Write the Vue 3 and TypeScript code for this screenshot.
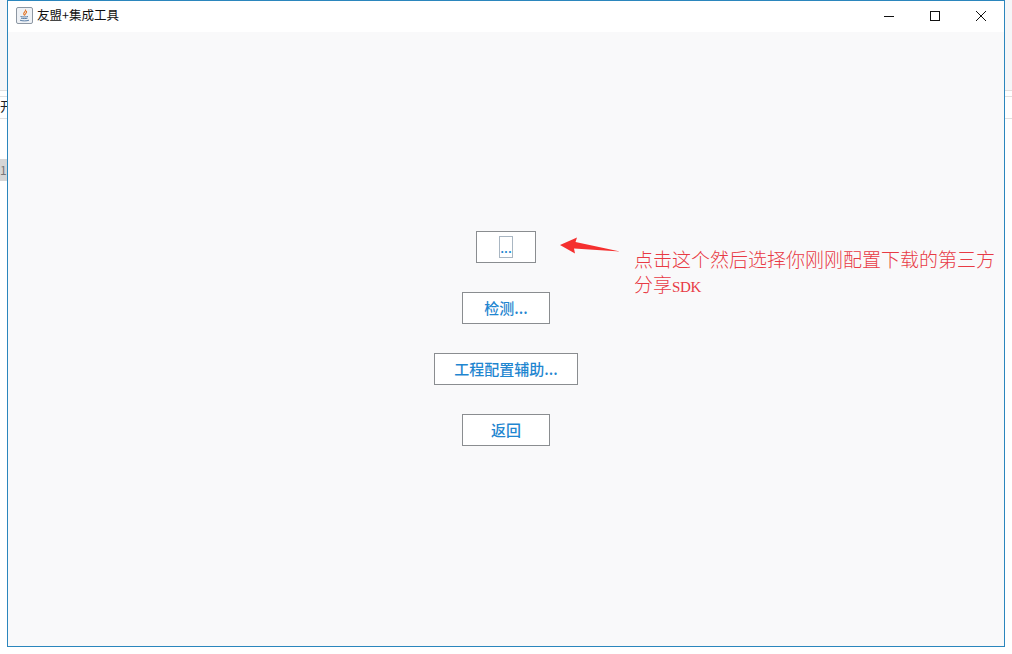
<script setup lang="ts">
const buttons: { label: string; cls: string }[] = [
  { label: '...', cls: 'b-browse' },
  { label: '检测...', cls: 'b-check' },
  { label: '工程配置辅助...', cls: 'b-wide' },
  { label: '返回', cls: 'b-check' },
]
</script>

<template>
  <div class="desktop">
    <div class="behind">
      <div class="behind-top"></div>
      <div class="behind-gap"></div>
      <div class="behind-tab"><span class="behind-text">开</span></div>
      <div class="behind-row"><span class="behind-num">1</span></div>
    </div>
    <div class="window">
      <header class="titlebar">
        <svg class="java" width="17" height="17" viewBox="0 0 17 17">
          <rect x="0.5" y="0.5" width="16" height="16" rx="1.5" fill="#eef1f5" stroke="#8d97a3" />
          <path d="M9.5 2.5c1 1.6-2.4 2.8-1.8 4.6.2.6.6 1 .9 1.4-.2-1.2 2.8-2.4 1.9-4.6" fill="none" stroke="#e2762a" stroke-width="1.1" />
          <path d="M4.5 9.5c1.6.6 6 .6 7.5 0M5 11.2c1.5.5 5 .5 6.5 0M4 13.2c2 .9 7 .9 9 0" fill="none" stroke="#5a7fa8" stroke-width="1" />
        </svg>
        <span class="title">友盟+集成工具</span>
        <div class="controls">
          <svg width="12" height="12" viewBox="0 0 12 12"><path d="M1 6.5h10" stroke="#111" stroke-width="1" /></svg>
          <svg width="12" height="12" viewBox="0 0 12 12"><rect x="1.5" y="1.5" width="9" height="9" fill="none" stroke="#111" stroke-width="1" /></svg>
          <svg width="12" height="12" viewBox="0 0 12 12"><path d="M1 1l10 10M11 1L1 11" stroke="#111" stroke-width="1" /></svg>
        </div>
      </header>
      <main class="content">
        <button v-for="b in buttons" :key="b.label" class="btn" :class="b.cls" type="button">
          <span class="btn-label">{{ b.label }}</span>
        </button>
      </main>
      <svg class="arrow" width="62" height="20" viewBox="0 0 62 20">
        <path d="M0 8L17 0.5L15.5 5L60 14.5L14 11.5L15 16.5Z" fill="#f5302f" />
      </svg>
      <p class="note">点击这个然后选择你刚刚配置下载的第三方<br />分享<span class="latin">SDK</span></p>
    </div>
  </div>
</template>

<style>
html, body { margin: 0; padding: 0; background: #fff; }
</style>

<style scoped>
.desktop {
  position: relative;
  width: 1012px;
  height: 654px;
  overflow: hidden;
  background: #fff;
  font-family: "Noto Sans CJK SC", sans-serif;
}
.behind {
  display: flex;
  flex-direction: column;
}
.behind-top {
  height: 90px;
  background: #f5f6f8;
}
.behind-gap {
  height: 5px;
  border-top: 1px solid #e0e0e0;
}
.behind-tab {
  height: 21px;
  border-top: 1px solid #e0e0e0;
  border-bottom: 1px solid #e0e0e0;
  overflow: hidden;
}
.behind-text {
  display: block;
  width: 7px;
  overflow: hidden;
  font-size: 13px;
  line-height: 18px;
  color: #222;
}
.behind-row {
  padding-top: 40px;
}
.behind-num {
  display: block;
  width: 7px;
  height: 22px;
  overflow: hidden;
  background: #d6d6d6;
  font-size: 12px;
  line-height: 22px;
  color: #777;
}
.window {
  position: absolute;
  left: 7px;
  top: 0;
  width: 996px;
  height: 645px;
  display: flex;
  flex-direction: column;
  border: 1px solid #2b86bd;
  background: #f9f9fa;
}
.titlebar {
  height: 31px;
  box-sizing: border-box;
  flex: none;
  display: flex;
  align-items: center;
  background: #fff;
  padding: 0 0 2px 8px;
}
.java { flex: none; }
.title {
  margin: 0 0 2px 4px;
  font-size: 12.5px;
  color: #111;
}
.controls {
  margin-left: auto;
  display: flex;
  align-items: center;
  gap: 34px;
  padding-right: 17px;
}
.content {
  flex: 1;
  display: flex;
  flex-direction: column;
  align-items: center;
  justify-content: center;
  gap: 29px;
  padding-bottom: 2px;
}
.btn {
  height: 32px;
  box-sizing: border-box;
  padding: 0;
  border: 1px solid #8a8d90;
  background: #fff;
  color: #1f86d0;
  font-family: "Noto Sans CJK SC", sans-serif;
  font-size: 15px;
  font-weight: 500;
  display: flex;
  align-items: center;
  justify-content: center;
}
.b-browse { width: 60px; }
.b-check { width: 88px; }
.b-wide { width: 144px; }
.b-browse .btn-label {
  display: block;
  width: 14px;
  height: 22px;
  line-height: 22px;
  box-sizing: border-box;
  border: 1px solid #a9b6c2;
  text-align: center;
  font-size: 13px;
  overflow: hidden;
}
.arrow {
  position: absolute;
  left: 552px;
  top: 236px;
}
.note {
  position: absolute;
  left: 626px;
  top: 245px;
  margin: 0;
  font-size: 19px;
  line-height: 25px;
  font-weight: 300;
  color: #e83a44;
  white-space: nowrap;
}
.latin {
  font-family: "Liberation Serif", serif;
  font-size: 15px;
  letter-spacing: -0.3px;
}
</style>
